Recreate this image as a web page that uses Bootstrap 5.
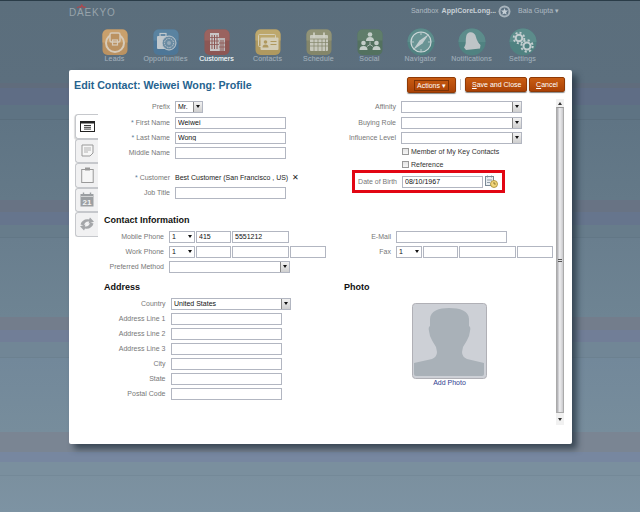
<!DOCTYPE html>
<html lang="en">
<head>
<meta charset="utf-8">
<title>Edit Contact</title>
<link href="https://cdn.jsdelivr.net/npm/bootstrap@5.3.0/dist/css/bootstrap.min.css" rel="stylesheet">
<style>
html,body{height:512px;overflow:hidden}
body{font-family:"Liberation Sans",Arial,sans-serif;font-size:7px;line-height:1.1;color:#111;
background:linear-gradient(to bottom,#2a3c48 0,#2a3c48 1px,#5b6e7c 1px,#5c6f7e 83px,#606c7c 83px,#606c7c 88px,#5f6d85 88px,#5f6d85 105px,#5e7383 105px,#5e7383 119px,#596d7c 119px,#596d7c 120px,#5f7484 120px,#647988 200px,#687384 200px,#687384 212px,#66758d 212px,#66758d 225px,#677c8b 225px,#677c8b 237px,#627786 237px,#627786 238px,#697e8e 238px,#6e8493 317px,#737d8c 317px,#737d8c 330px,#717e97 330px,#717e97 342px,#718696 342px,#718696 357px,#6c8190 357px,#6c8190 358px,#72889a 358px,#778d9c 432px,#7a8593 432px,#7a8593 452px,#7787a0 452px,#7787a0 462px,#7a8f9e 462px,#7a8f9e 475px,#748998 475px,#748998 476px,#7b909f 476px,#7d93a3 512px)}
.topbar{height:21px;padding:1px 81px 0 69px;color:#b0bbc3}
.brand{font-size:10px;color:#97a3ab;letter-spacing:.8px;line-height:10px}
.brand-wrap svg{display:block;margin:3px 0 -1px 7px}
.env b{color:#c8d0d6;font-weight:700;margin-left:3px}
.env{font-size:7px;gap:7px}
.env .emblem{margin-left:-5px}
.mainnav{padding-left:89px;height:42px;margin-top:7px}
.navi{width:51px;color:#93a2ae;text-align:center;letter-spacing:.2px;text-shadow:0 0 .6px #93a2ae}
.navi svg{display:block;margin:0 auto -1px;height:28px;width:28px;opacity:.88}
.navi.cur{color:#dfe6ea;text-shadow:0 0 .6px #dfe6ea;letter-spacing:.1px}
.editor{width:503px;height:374px;margin-left:69px;background:#fff;border-radius:2px;box-shadow:5px 5px 6px rgba(38,52,66,.75);border:0}
.headbar{height:29px;padding:0 7px 0 5px}
.ttl{font-size:10.7px;font-weight:700;color:#26638f;margin:0;line-height:12px}
.act{border:1px solid #8f3a06;background:linear-gradient(#c95c12,#ab4206);color:#fff;font-size:7px;border-radius:2px;padding:0 6px;height:15px;line-height:13px;box-shadow:0 1px 1px #888;white-space:nowrap}
.act:hover{background:#ab4206;color:#fff;border-color:#8f3a06}
.act.drop{height:16px;width:49px;padding:2px 6px}
.act.drop span{display:block;border:1px solid #7e3305;line-height:9px;height:11px;white-space:nowrap}
.act.wsave{width:62px}
.act.wcancel{width:36px;margin-left:2px}
.act u{text-decoration:underline}
.sepr{width:1px;height:11px;background:#c5c8cc;margin:0 4px}
.bodywrap{height:345px}
.tabsrail{width:29px;margin-left:6px;margin-top:15px}
.vtab{width:23px;height:24.5px;border:1px solid #c6c8cc;border-right:0;border-radius:3px 0 0 3px;background:#f1f1f2;display:flex;align-items:center;justify-content:center;margin-right:6px}
.vtab.on{background:#fff;border-color:#c6c8cc;box-shadow:-1px 1px 1px #ddd}
.vtab svg{display:block}
.formarea{width:452px}
.lcol{width:240px}
.rcol{width:212px}
.sect1{height:114px}
.sect2{height:67px}
.frow{height:15px;display:flex;align-items:center}
.frow.nudge{margin-top:1px}
.frow.gapped{margin-top:10px}
.lab{color:#777;text-align:right;margin-right:5px;flex:none;white-space:nowrap}
.lab i{font-style:normal;color:#5b7c98;margin-right:2px}
.w66{width:66px}.w60{width:60px}.w61{width:61.5px;margin-right:5.5px}.w52{width:52px}.w47{width:47px}
.fld{display:block;height:12px;padding:0 2px;border:1px solid #b2b6c1;border-radius:0;font-size:7px;line-height:10px;color:#111;background:#fff;flex:none;min-height:0;font-family:inherit}
.fld:focus{box-shadow:none;border-color:#b2b6c1}
.w111{width:111px}.w35{width:35px}.w57{width:57px}.w36{width:36px}.w81{width:81px}
.seg{margin-right:1px}
.pick{height:12px;border:1px solid #b2b6c1;display:flex;align-items:stretch;flex:none;background:#fff}
.p28{width:28px}.p121{width:121px}.p120{width:120px}.p26{width:26px}
.pick select{appearance:none;-webkit-appearance:none;border:0;background:transparent;font-size:7px;font-family:inherit;color:#111;flex:1;min-width:0;padding:0 2px;height:10px;line-height:10px;outline:0}
.pbtn{width:9px;flex:none;background:linear-gradient(#f2f2f2,#cfcfcf);border-left:1px solid #888;display:flex;align-items:center;justify-content:center}
.pbtn.flat{background:transparent;border:0}
.tri{width:0;height:0;border-left:2px solid transparent;border-right:2px solid transparent;border-top:3px solid #111}
.secthd{font-size:9px;font-weight:700;color:#111;margin:0;height:14px;line-height:14px}
.secthd.spaced{margin-bottom:2px}
.spacer16{padding-top:16px}
.chk{height:13px;display:flex;align-items:center;color:#333;margin-left:57px;margin-bottom:0}
.chk input{width:7px;height:7px;margin:0 2px 0 1px;appearance:none;-webkit-appearance:none;border:1px solid #999;background:linear-gradient(#e4e4e4,#f6f6f6);flex:none}
.dobbox{margin:-1px 0 0 8px;width:153px;height:23px;border:3px solid #e20613;display:flex;align-items:center}
.dobbox .lab{width:42px;margin-right:5px}
.dobbox svg{margin-left:2px}
.custval{color:#222;white-space:nowrap}
.xmark{margin-left:4px;font-size:8px;color:#222;line-height:8px}
.photowrap{margin:9px 0 0 68px;width:75px}
.avatar{width:75px;height:76px;display:block}
.addp{display:block;text-align:center;color:#2f3d8f;text-decoration:none;margin-top:0;line-height:8px}
.vbar{width:8px;margin:0;height:326px;display:flex;flex-direction:column;flex:none}
.sbtn{height:8px;background:#f1f1f1;display:flex;align-items:center;justify-content:center;flex:none}
.sbtn.tall{height:12px}
.sbtn .up{width:0;height:0;border:2px solid transparent;border-top:0;border-bottom:3px solid #333}
.sbtn .dn{width:0;height:0;border:2px solid transparent;border-bottom:0;border-top:3px solid #333}
.sthumb{flex:1;background:linear-gradient(to right,#a9a9ad,#eeeef0 45%,#c9c9cc);border:1px solid #aaa;border-top-color:#999;display:flex;align-items:center;justify-content:center}
.grip{width:4px;height:3px;border-top:1px solid #555;border-bottom:1px solid #555}
</style>
</head>
<body>
<header class="topbar d-flex justify-content-between">
  <div class="brand-wrap">
    <svg width="11" height="5" viewBox="0 0 11 5"><path d="M1 3.500Q5.500 1 10 3.500M4 4.500L5.800 .5L7.500 4.500" fill="none" stroke="#b5454b" stroke-width="1"/></svg>
    <div class="brand">DAEKYO</div>
  </div>
  <div class="env d-flex align-items-center">
    <span>Sandbox<b>AppICoreLong...</b></span>
    <svg class="emblem" width="13" height="13" viewBox="0 0 13 13"><circle cx="6.500" cy="6.500" r="6" fill="#a8b4bd"/><circle cx="6.500" cy="6.500" r="4" fill="#5d7181"/><path d="M6.500 3l1 2.400 2.500.2-1.900 1.600.6 2.500-2.200-1.300-2.200 1.300.6-2.500L3 5.600l2.500-.2z" fill="#c4ced5"/></svg>
    <span>Bala Gupta <span>&#9662;</span></span>
  </div>
</header>
<nav class="mainnav d-flex">
  <div class="navi"><svg viewBox="0 0 28 28"><rect x="1.500" y="1.500" width="25" height="25.500" rx="5" fill="#c9975e"/><path d="M1.500 6.500a5 5 0 0 1 5-5h15a5 5 0 0 1 5 5v8H1.500z" fill="#d9a76a"/><circle cx="14" cy="15" r="9" fill="none" stroke="#e8d8c2" stroke-width="2"/><rect x="9" y="5" width="10" height="9" rx="1.500" fill="#c9975e" stroke="#e8d8c2" stroke-width="1.500"/><rect x="11.500" y="12" width="5" height="5" fill="none" stroke="#e8d8c2" stroke-width="1.200"/></svg>Leads</div>
  <div class="navi"><svg viewBox="0 0 28 28"><rect x="1.500" y="1.500" width="25" height="25.500" rx="5" fill="#4c789b"/><path d="M1.500 6.500a5 5 0 0 1 5-5h15a5 5 0 0 1 5 5v6H1.500z" fill="#5a86a6"/><rect x="5" y="8" width="13" height="13" rx="1" fill="#cfd5d9"/><rect x="8" y="5.500" width="6" height="3" fill="none" stroke="#cfd5d9" stroke-width="1.200"/><circle cx="17" cy="15" r="7" fill="#6d8fa8" stroke="#cfd5d9" stroke-width="1"/><circle cx="17" cy="15" r="4.500" fill="none" stroke="#cfd5d9" stroke-width="1" stroke-dasharray="1.500 1"/><circle cx="17" cy="15" r="2" fill="#9db2c1"/></svg>Opportunities</div>
  <div class="navi cur"><svg viewBox="0 0 28 28"><rect x="1.500" y="1.500" width="25" height="25.500" rx="5" fill="#94544f"/><path d="M1.500 6.500a5 5 0 0 1 5-5h15a5 5 0 0 1 5 5v6H1.500z" fill="#a3625c"/><rect x="7" y="5" width="9" height="18" fill="#d9d3d1"/><rect x="16" y="10" width="6" height="13" fill="#c9c0be"/><path d="M9 7v14M11.500 7v14M14 7v14M18 12v11M20 12v11" stroke="#94544f" stroke-width="1"/><path d="M7 9.500h9M7 13h9M7 16.500h9M16 15h6M16 19h6" stroke="#94544f" stroke-width=".8"/></svg>Customers</div>
  <div class="navi"><svg viewBox="0 0 28 28"><rect x="1.500" y="1.500" width="25" height="25.500" rx="5" fill="#bb9f5c"/><path d="M1.500 6.500a5 5 0 0 1 5-5h15a5 5 0 0 1 5 5v6H1.500z" fill="#cbb06b"/><rect x="4.500" y="6.500" width="17" height="12" rx="1" fill="none" stroke="#e5dcc0" stroke-width="1"/><rect x="6.500" y="9.500" width="18" height="12.500" rx="1" fill="#e5dcc0"/><circle cx="11.500" cy="14" r="1.800" fill="#bb9f5c"/><path d="M8.500 19.500a3 3 0 0 1 6 0z" fill="#bb9f5c"/><path d="M16.500 13.500h6M16.500 16.500h6" stroke="#bb9f5c" stroke-width="1.200"/></svg>Contacts</div>
  <div class="navi"><svg viewBox="0 0 28 28"><rect x="1.500" y="1.500" width="25" height="25.500" rx="5" fill="#8a8a68"/><path d="M1.500 6.500a5 5 0 0 1 5-5h15a5 5 0 0 1 5 5v6H1.500z" fill="#999977"/><rect x="5" y="7" width="18" height="16" rx="1" fill="#d8d6c6"/><path d="M9 4.500v5M19 4.500v5" stroke="#e4e2d4" stroke-width="1.600"/><path d="M5 11h18M5 14.500h18M5 18h18M9 11v12M13 11v12M17 11v12M20.500 11v12" stroke="#8a8a68" stroke-width=".7"/></svg>Schedule</div>
  <div class="navi"><svg viewBox="0 0 28 28"><rect x="1.500" y="1.500" width="25" height="25.500" rx="5" fill="#52725c"/><path d="M1.500 6.500a5 5 0 0 1 5-5h15a5 5 0 0 1 5 5v6H1.500z" fill="#608068"/><g fill="#d3dcd4"><circle cx="14" cy="6.500" r="2.300"/><path d="M10 13a4 4 0 0 1 8 0z"/><circle cx="7.500" cy="15" r="2.300"/><path d="M3.500 22a4 4 0 0 1 8 0z"/><circle cx="20.500" cy="15" r="2.300"/><path d="M16.500 22a4 4 0 0 1 8 0z"/></g><path d="M14 13.500v3l-3 2M14 16.500l3 2" stroke="#d3dcd4" stroke-width=".8" fill="none"/></svg>Social</div>
  <div class="navi"><svg viewBox="0 0 28 28"><circle cx="14" cy="14" r="13.500" fill="#4f8582"/><path d="M14 .5a13.500 13.500 0 0 1 13.500 13.500H.5A13.500 13.500 0 0 1 14 .5z" fill="#5d918e"/><circle cx="14" cy="14" r="10" fill="#6b9a98" stroke="#dbe4e4" stroke-width="1.200"/><path d="M22 6l-6.500 9.500L6 22l6.500-9.500z" fill="#d0dbdb"/><path d="M14 4v3M14 21v3M4 14h3M21 14h3" stroke="#dbe4e4" stroke-width=".8"/></svg>Navigator</div>
  <div class="navi"><svg viewBox="0 0 28 28"><circle cx="14" cy="14" r="13.500" fill="#4f8582"/><path d="M14 .5a13.500 13.500 0 0 1 13.500 13.500H.5A13.500 13.500 0 0 1 14 .5z" fill="#5d918e"/><path d="M11 4.500c3-1 5.500.5 6.500 3 1 3 1.500 6 5 9.500l-.5 3.500-14 1.500-2-2.500c2.500-3.500 1.500-6.500 2-10 .2-2.500 1.200-4.300 3-5z" fill="#ccd0d2"/></svg>Notifications</div>
  <div class="navi"><svg viewBox="0 0 28 28"><circle cx="14" cy="14" r="13.500" fill="#4f8582"/><path d="M14 .5a13.500 13.500 0 0 1 13.500 13.500H.5A13.500 13.500 0 0 1 14 .5z" fill="#5d918e"/><g fill="none" stroke="#d3dcdc"><circle cx="10" cy="10" r="3.300" stroke-width="2"/><circle cx="10" cy="10" r="5.300" stroke-width="1.800" stroke-dasharray="2 2.150"/><circle cx="18" cy="18" r="3.500" stroke-width="2"/><circle cx="18" cy="18" r="5.700" stroke-width="2" stroke-dasharray="2.200 2.270"/></g></svg>Settings</div>
</nav>
<main class="card editor">
  <div class="headbar d-flex justify-content-between align-items-center">
    <h1 class="ttl">Edit Contact: Weiwei Wong: Profile</h1>
    <div class="d-flex align-items-center">
      <button type="button" class="btn act drop"><span>Actions &#9662;</span></button>
      <span class="sepr"></span>
      <button type="button" class="btn act wsave"><u>S</u>ave and Close</button>
      <button type="button" class="btn act wcancel"><u>C</u>ancel</button>
    </div>
  </div>
  <div class="bodywrap d-flex">
    <div class="tabsrail">
      <div class="vtab on"><svg width="15" height="11" viewBox="0 0 15 11"><rect x=".5" y=".5" width="14" height="10" fill="#fff" stroke="#222"/><rect x="0" y="0" width="15" height="2.500" fill="#222"/><path d="M4 4.500h7M4 6.300h7M4 8.100h7" stroke="#222" stroke-width=".9"/></svg></div>
      <div class="vtab"><svg width="13" height="13" viewBox="0 0 13 13"><path d="M1 1h11v8l-3 3H1z" fill="#f6f6f6" stroke="#999"/><path d="M3 4h7M3 6h7M3 8h4" stroke="#aaa" stroke-width=".9"/></svg></div>
      <div class="vtab"><svg width="13" height="16" viewBox="0 0 13 16"><rect x=".7" y="2.500" width="11.500" height="13" fill="#f6f6f6" stroke="#999"/><rect x="4" y=".5" width="5" height="3" fill="#999"/></svg></div>
      <div class="vtab"><svg width="14" height="15" viewBox="0 0 14 15"><rect x=".5" y="2" width="13" height="12.500" fill="#9c9fa2"/><path d="M3.500 .5v3M10.500 .5v3" stroke="#9c9fa2" stroke-width="1.400"/><path d="M1 4.500h12" stroke="#e8e8e8" stroke-width=".7"/><text x="7" y="12.600" text-anchor="middle" font-family="Liberation Sans" font-size="8" font-weight="700" fill="#f2f2f2">21</text></svg></div>
      <div class="vtab"><svg width="16" height="14" viewBox="0 0 16 14"><g fill="#a4a6a9"><path d="M1.500 7.500C2.500 3.500 6.500 1.500 10 2.500L11 .5 15 4.800 9.500 6.500 10.200 4.700C8 4 5.500 5.500 5 8.500z"/><path d="M14.500 6.500C13.500 10.500 9.500 12.500 6 11.500L5 13.500 1 9.200 6.500 7.500 5.800 9.300C8 10 10.500 8.500 11 5.500z"/></g></svg></div>
    </div>
    <div class="formarea">
      <div class="row g-0 flex-nowrap sect1">
        <div class="lcol">
          <div class="frow"><label class="lab w66">Prefix</label><div class="pick p28"><select><option>Mr.</option></select><span class="pbtn"><span class="tri"></span></span></div></div>
          <div class="frow nudge"><label class="lab w66"><i>*</i>First Name</label><input class="form-control fld w111" value="Weiwei"></div>
          <div class="frow"><label class="lab w66"><i>*</i>Last Name</label><input class="form-control fld w111" value="Wong"></div>
          <div class="frow"><label class="lab w66">Middle Name</label><input class="form-control fld w111"></div>
          <div class="frow gapped"><label class="lab w66"><i>*</i>Customer</label><span class="custval">Best Customer (San Francisco , US)</span><span class="xmark">&#10005;</span></div>
          <div class="frow"><label class="lab w66">Job Title</label><input class="form-control fld w111"></div>
        </div>
        <div class="rcol">
          <div class="frow"><label class="lab w52">Affinity</label><div class="pick p121"><select></select><span class="pbtn"><span class="tri"></span></span></div></div>
          <div class="frow nudge"><label class="lab w52">Buying Role</label><div class="pick p121"><select></select><span class="pbtn"><span class="tri"></span></span></div></div>
          <div class="frow"><label class="lab w52">Influence Level</label><div class="pick p121"><select></select><span class="pbtn"><span class="tri"></span></span></div></div>
          <label class="chk"><input type="checkbox">Member of My Key Contacts</label>
          <label class="chk"><input type="checkbox">Reference</label>
          <div class="dobbox"><label class="lab">Date of Birth</label><input class="form-control fld w81" value="08/10/1967"><svg width="13" height="13" viewBox="0 0 13 13"><rect x=".5" y="1.500" width="8" height="9" fill="#e9eef2" stroke="#7b8a97"/><path d="M2.500 .5v2M6.500 .5v2M2 5h5M2 7.500h3" stroke="#7b8a97" stroke-width=".8"/><circle cx="9" cy="9" r="3.500" fill="#f2d67a" stroke="#a58a2e" stroke-width=".8"/><path d="M9 7v2h1.800" stroke="#6b5a1c" stroke-width=".7" fill="none"/></svg></div>
        </div>
      </div>
      <div class="row g-0 flex-nowrap sect2">
        <div class="lcol">
          <h2 class="secthd spaced">Contact Information</h2>
          <div class="frow"><label class="lab w60">Mobile Phone</label><div class="pick seg p26"><select><option>1</option></select><span class="pbtn flat"><span class="tri"></span></span></div><input class="form-control fld w35 seg" value="415"><input class="form-control fld w57" value="5551212"></div>
          <div class="frow"><label class="lab w60">Work Phone</label><div class="pick seg p26"><select><option>1</option></select><span class="pbtn flat"><span class="tri"></span></span></div><input class="form-control fld w35 seg"><input class="form-control fld w57 seg"><input class="form-control fld w36"></div>
          <div class="frow"><label class="lab w60">Preferred Method</label><div class="pick p121"><select></select><span class="pbtn"><span class="tri"></span></span></div></div>
        </div>
        <div class="rcol spacer16">
          <div class="frow"><label class="lab w47">E-Mail</label><input class="form-control fld w111"></div>
          <div class="frow"><label class="lab w47">Fax</label><div class="pick seg p26"><select><option>1</option></select><span class="pbtn flat"><span class="tri"></span></span></div><input class="form-control fld w35 seg"><input class="form-control fld w57 seg"><input class="form-control fld w36"></div>
        </div>
      </div>
      <div class="row g-0 flex-nowrap">
        <div class="lcol">
          <h2 class="secthd spaced">Address</h2>
          <div class="frow"><label class="lab w61">Country</label><div class="pick p120"><select><option>United States</option></select><span class="pbtn"><span class="tri"></span></span></div></div>
          <div class="frow"><label class="lab w61">Address Line 1</label><input class="form-control fld w111"></div>
          <div class="frow"><label class="lab w61">Address Line 2</label><input class="form-control fld w111"></div>
          <div class="frow"><label class="lab w61">Address Line 3</label><input class="form-control fld w111"></div>
          <div class="frow"><label class="lab w61">City</label><input class="form-control fld w111"></div>
          <div class="frow"><label class="lab w61">State</label><input class="form-control fld w111"></div>
          <div class="frow"><label class="lab w61">Postal Code</label><input class="form-control fld w111"></div>
        </div>
        <div class="rcol">
          <h2 class="secthd">Photo</h2>
          <div class="photowrap">
            <svg class="avatar" viewBox="0 0 75 76"><rect x=".5" y=".5" width="74" height="75" rx="3" fill="#cdd0d6" stroke="#b0b0b6"/><path d="M2 60L20 56Q25 54 25 49L24 44Q20 38 18 33L17 28Q16 24 18 23L18 16C18 8 27 5 37 5C48 5 57 8 57 16L57 23Q59 24 58 28L57 33Q55 38 51 44L50 49Q50 54 55 56L72 60L72 71Q72 73 70 73L4 73Q2 73 2 71Z" fill="#a9b1b8"/></svg>
            <a href="#" class="addp">Add Photo</a>
          </div>
        </div>
      </div>
    </div>
    <div class="vbar"><span class="sbtn"><span class="up"></span></span><span class="sthumb"><span class="grip"></span></span><span class="sbtn tall"><span class="dn"></span></span></div>
  </div>
</main>
<script src="https://cdn.jsdelivr.net/npm/bootstrap@5.3.0/dist/js/bootstrap.bundle.min.js"></script>
</body>
</html>
